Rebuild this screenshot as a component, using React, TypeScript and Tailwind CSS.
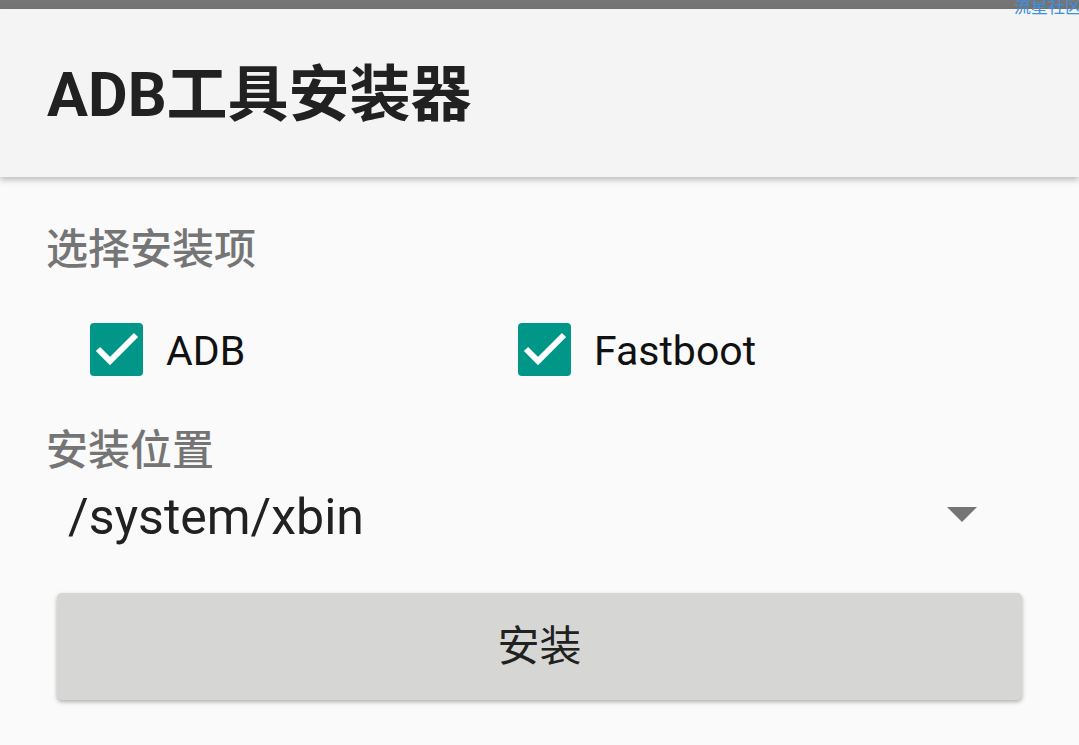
const font = { fontFamily: '"Roboto", "Noto Sans CJK SC", sans-serif' };

const CheckBox = ({ label }: { label: string }) => (
  <div className="flex items-center">
    <div className="w-[53px] h-[53px] rounded-[4px] bg-[#009688] flex items-center justify-center">
      <svg width="53" height="53" viewBox="0 0 53 53">
        <polyline points="8,26 20,38 46,12" fill="none" stroke="#ffffff" strokeWidth="6" />
      </svg>
    </div>
    <span className="ml-[23px] mt-[3px] text-[41px] leading-none text-[#111111]">{label}</span>
  </div>
);

export default function App() {
  return (
    <div
      className="relative w-[1079px] h-[745px] overflow-hidden bg-[#fafafa] font-['Roboto','Noto_Sans_CJK_SC',sans-serif]"
      style={font}
    >
      {/* status bar */}
      <div className="h-[9px] bg-[#757575]" />
      {/* watermark */}
      <span className="absolute z-20 top-[-5px] left-[1014px] text-[17px] leading-[24px] text-[#3d8fe0] whitespace-nowrap">
        流星社区
      </span>
      {/* toolbar */}
      <div className="relative z-10 h-[168px] bg-[#f4f4f4] flex items-center pl-[47px] shadow-[0_3px_6px_rgba(0,0,0,0.25)]">
        <h1 className="text-[61px] font-bold leading-none text-[#212121] mt-[4px]">ADB工具安装器</h1>
      </div>

      <div className="flex flex-col">
        <div className="pl-[46px] mt-[48px] text-[42px] leading-[50px] font-medium text-[#757575]">选择安装项</div>

        <div className="flex pl-[90px] mt-[48px]">
          <div className="w-[428px]">
            <CheckBox label="ADB" />
          </div>
          <CheckBox label="Fastboot" />
        </div>

        <div className="pl-[46px] mt-[50px] text-[42px] leading-[50px] font-medium text-[#757575]">安装位置</div>

        <div className="flex items-center justify-between pl-[68px] pr-[102px] h-[68px] mt-[6px]">
          <span className="text-[50px] leading-none text-[#212121] mt-[2px]">/system/xbin</span>
          <svg width="30" height="15" viewBox="0 0 30 15" className="-mt-[4px]">
            <polygon points="0,0 30,0 15,15" fill="#757575" />
          </svg>
        </div>

        <button className="mx-[57px] mt-[43px] h-[107px] rounded-[5px] bg-[#d6d7d4] shadow-[0_2px_4px_rgba(0,0,0,0.3)] text-[42px] text-[#212121] flex items-center justify-center">
          安装
        </button>
      </div>
    </div>
  );
}
